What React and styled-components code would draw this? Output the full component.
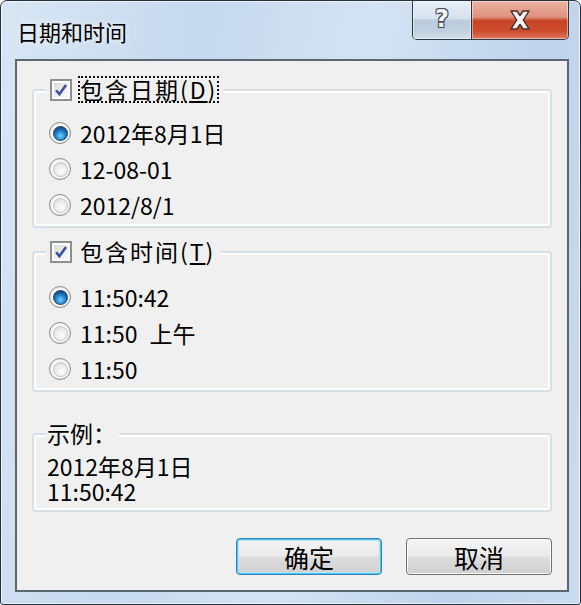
import React from 'react';
import styled, { createGlobalStyle } from 'styled-components';

const Global = createGlobalStyle`
  html, body { margin: 0; padding: 0; background: #ffffff; }
  body {
    width: 581px; height: 605px; overflow: hidden;
    font-family: "Noto Sans CJK SC", "Noto Sans", sans-serif;
    color: #000;
  }
  * { box-sizing: border-box; }
`;

const Window = styled.div`
  width: 581px;
  height: 605px;
  border: 1px solid #27303b;
  border-radius: 7px 7px 3px 3px;
  background: linear-gradient(100deg, #d8e6f4 0%, #c6d9ee 30%, #d4e3f3 55%, #bfd4ec 80%, #c9dbef 100%);
  box-shadow: inset 0 0 0 1px rgba(255, 255, 255, 0.6);
  display: flex;
  flex-direction: column;
  overflow: hidden;
`;

const TitleBar = styled.div`
  height: 58px;
  flex: none;
  display: flex;
  align-items: flex-start;
  justify-content: space-between;
  padding: 0 11px 0 16px;
`;

const Title = styled.div`
  font-size: 22px;
  line-height: 24px;
  padding-top: 18px;
  color: #000;
  text-shadow: 0 0 6px rgba(255, 255, 255, 0.9);
`;

const CaptionGroup = styled.div`
  display: flex;
  height: 39px;
  border: 1px solid #2e3946;
  border-top: none;
  border-radius: 0 0 5px 5px;
  overflow: hidden;
`;

const CaptionButton = styled.div`
  width: ${p => p.$w}px;
  height: 100%;
  display: flex;
  align-items: center;
  justify-content: center;
  background: ${p => p.$close
    ? 'linear-gradient(#eab2a4 0%, #e0937e 42%, #c84324 52%, #cc4d2e 80%, #dc7a5e 100%)'
    : 'linear-gradient(#e6eef7 0%, #d6e2ef 45%, #b9cadc 52%, #c2d1e2 80%, #d2dfec 100%)'};
  border-left: ${p => p.$close ? '1px solid #3a2a28' : 'none'};
  box-shadow: inset 0 0 0 1px rgba(255, 255, 255, 0.45);
`;

const HelpGlyph = styled.span`
  font-family: "DejaVu Sans", sans-serif;
  font-weight: bold;
  font-size: 24px;
  line-height: 1;
  color: #f4f6f8;
  margin-top: -2px;
  text-shadow: -1px -1px 0 #3c4652, 1px -1px 0 #3c4652, -1px 1px 0 #3c4652, 1px 1px 0 #3c4652;
`;

const Client = styled.div`
  flex: 1;
  margin: 0 11px 12px 14px;
  border: 2px solid #5c6772;
  background: #f0f0f0;
  display: flex;
  flex-direction: column;
  padding: 15px 15px 15px 15px;
`;

const Group = styled.fieldset`
  margin: ${p => p.$top}px 0 0 0;
  padding: ${p => p.$pad};
  min-inline-size: 0;
  border: 2px solid #d5dfe5;
  border-radius: 4px;
  box-shadow: inset 0 0 0 2px #ffffff;
`;

const Legend = styled.legend`
  margin-left: 12px;
  padding: 0 4px;
  height: 27px;
  display: flex;
  align-items: center;
  gap: 6px;
  background: #f0f0f0;
  font-size: 23px;
  line-height: 27px;
`;

const PlainLegend = styled(Legend)`
  padding: 0 3px 0 1px;
`;

const FocusLabel = styled.span`
  height: 27px;
  display: flex;
  align-items: center;
  padding: 0 0 0 0;
  letter-spacing: 2px;
  border: 2px dotted ${p => p.$focus ? '#111' : 'transparent'};
  font-size: 23px;
  line-height: 23px;
`;

const CheckBox = styled.span`
  width: 22px;
  height: 22px;
  flex: none;
  border: 2px solid #8e8f8f;
  background: #ffffff;
  padding: 2px;
  display: flex;
`;

const CheckInner = styled.span`
  flex: 1;
  background: linear-gradient(135deg, #d9dadb 0%, #eeeeee 55%, #f8f8f8 100%);
  display: flex;
  align-items: center;
  justify-content: center;
`;

const Row = styled.div`
  height: 36px;
  display: flex;
  align-items: center;
  gap: 9px;
  padding-left: 15px;
  font-size: 23px;
  line-height: 24px;
  word-spacing: 7px;
  white-space: pre;
`;

const RadioOuter = styled.span`
  width: 22px;
  height: 22px;
  flex: none;
  border-radius: 50%;
  border: 1px solid #8a8b8c;
  background: radial-gradient(circle at 50% 50%, #fafafa 55%, #d6d6d6 100%);
  display: flex;
  align-items: center;
  justify-content: center;
`;

const RadioDot = styled.span`
  width: 15px;
  height: 15px;
  border-radius: 50%;
  border: 1px solid ${p => p.$on ? '#1b3d66' : '#c4c4c4'};
  background: ${p => p.$on
    ? 'radial-gradient(circle at 50% 68%, #7fd3ff 0%, #2b93dc 35%, #0f5597 70%, #0a3766 100%)'
    : 'radial-gradient(circle at 60% 65%, #fbfbfb 0%, #eeeeee 45%, #d2d2d2 100%)'};
`;

const SampleBody = styled.div`
  padding: 7px 13px 6px 13px;
  font-size: 23px;
  line-height: 25px;
`;

const ButtonRow = styled.div`
  margin-top: 26px;
  display: flex;
  justify-content: flex-end;
  gap: 24px;
`;

const Button = styled.button`
  width: 146px;
  height: 37px;
  border: 1px solid ${p => p.$default ? '#3281bd' : '#707070'};
  border-radius: 4px;
  background: linear-gradient(#f4f4f4 0%, #ebebeb 48%, #dedede 52%, #cfcfcf 100%);
  box-shadow: ${p => p.$default
    ? 'inset 0 0 0 1px #4cc5f2, inset 0 0 0 2px #b5e6f8'
    : 'inset 0 0 0 1px #fbfbfb'};
  font-family: "Noto Sans CJK SC", "Noto Sans", sans-serif;
  font-size: 25px;
  line-height: 26px;
  color: #000;
  padding: 0;
`;

const Check = () => (
  <svg width="14" height="14" viewBox="0 0 14 14">
    <path d="M2.2 7.2 L5.4 11.2 L12 2" fill="none" stroke="#3a51a0" strokeWidth="2.6" strokeLinejoin="miter" />
  </svg>
);

const CloseGlyph = () => (
  <svg width="30" height="22" viewBox="0 0 30 22">
    <path d="M6 2 H12 L15 6.5 L18 2 H24 L18.3 11 L24 20 H18 L15 15.5 L12 20 H6 L11.7 11 Z"
      fill="#f3f3f3" stroke="#4a2a22" strokeWidth="1.4" strokeLinejoin="round" />
  </svg>
);

const Radio = ({ on, children }) => (
  <Row>
    <RadioOuter><RadioDot $on={on} /></RadioOuter>
    <span>{children}</span>
  </Row>
);

export default function App() {
  return (
    <>
      <Global />
      <Window>
        <TitleBar>
          <Title>日期和时间</Title>
          <CaptionGroup>
            <CaptionButton $w={58}><HelpGlyph>?</HelpGlyph></CaptionButton>
            <CaptionButton $w={97} $close><CloseGlyph /></CaptionButton>
          </CaptionGroup>
        </TitleBar>
        <Client>
          <Group $top={0} $pad="12px 0 3px 0">
            <Legend>
              <CheckBox><CheckInner><Check /></CheckInner></CheckBox>
              <FocusLabel $focus>包含日期(<u>D</u>)</FocusLabel>
            </Legend>
            <Radio on>2012年8月1日</Radio>
            <Radio>12-08-01</Radio>
            <Radio>2012/8/1</Radio>
          </Group>
          <Group $top={10} $pad="14px 0 3px 0">
            <Legend>
              <CheckBox><CheckInner><Check /></CheckInner></CheckBox>
              <FocusLabel>包含时间(<u>T</u>)</FocusLabel>
            </Legend>
            <Radio on>11:50:42</Radio>
            <Radio>11:50 上午</Radio>
            <Radio>11:50</Radio>
          </Group>
          <Group $top={28} $pad="0">
            <PlainLegend>示例：</PlainLegend>
            <SampleBody>
              <div>2012年8月1日</div>
              <div>11:50:42</div>
            </SampleBody>
          </Group>
          <ButtonRow>
            <Button $default>确定</Button>
            <Button>取消</Button>
          </ButtonRow>
        </Client>
      </Window>
    </>
  );
}
